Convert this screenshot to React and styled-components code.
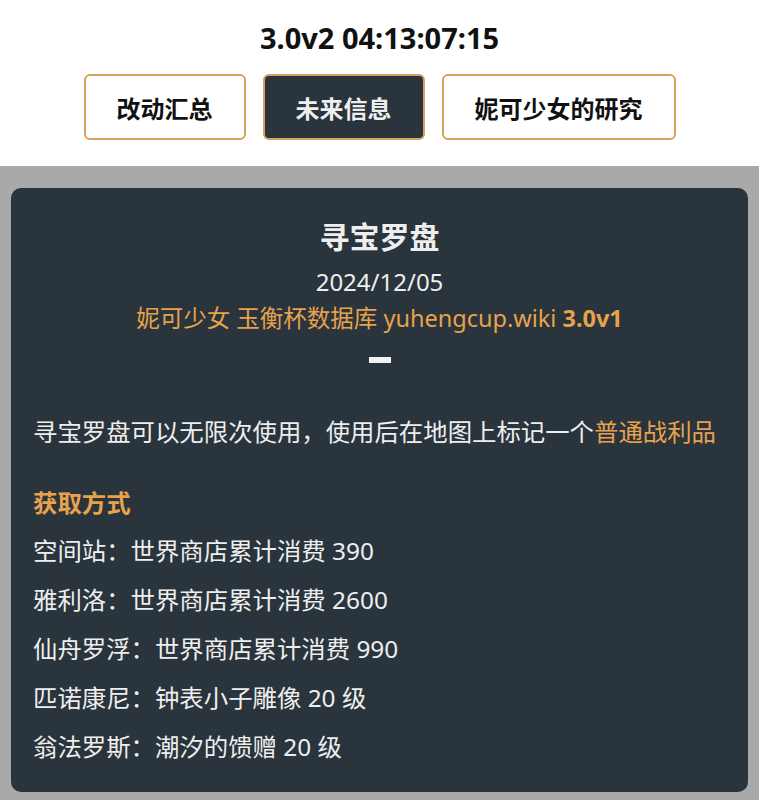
import React from "react";
import styled, { createGlobalStyle } from "styled-components";

const GlobalStyle = createGlobalStyle`
  html, body {
    margin: 0;
    padding: 0;
    background: #a9a9a9;
  }
  body {
    font-family: "Noto Sans", "Noto Sans CJK SC", sans-serif;
  }
  * { box-sizing: border-box; }
`;

const Header = styled.header`
  background: #ffffff;
  display: flex;
  flex-direction: column;
  align-items: center;
  padding: 20px 0 26px;
`;

const Clock = styled.h1`
  margin: 0;
  font-size: 29px;
  line-height: 36px;
  font-weight: 700;
  color: #111;
`;

const Nav = styled.nav`
  display: flex;
  gap: 17px;
  margin-top: 18px;
`;

const NavButton = styled.button`
  height: 66px;
  padding: 0 31px;
  border: 2px solid #d9a05b;
  border-radius: 6px;
  background: ${(p) => (p.$active ? "#29343c" : "#ffffff")};
  color: ${(p) => (p.$active ? "#eeeeee" : "#111111")};
  font-family: "Noto Sans CJK SC", sans-serif;
  font-size: 24px;
  font-weight: 700;
  cursor: pointer;
`;

const Main = styled.main`
  padding: 22px 11px 9px;
`;

const Card = styled.section`
  background: #29343c;
  border-radius: 10px;
  padding: 27px 22px 27px;
  color: #eeeeee;
  display: flex;
  flex-direction: column;
`;

const Centered = styled.div`
  display: flex;
  flex-direction: column;
  align-items: center;
  text-align: center;
`;

const Title = styled.h2`
  margin: 0;
  font-family: "Noto Sans CJK SC", sans-serif;
  font-size: 30px;
  line-height: 40px;
  font-weight: 700;
`;

const DateLine = styled.div`
  margin-top: 8px;
  font-size: 24px;
  line-height: 37px;
`;

const Source = styled.div`
  font-size: 23.5px;
  line-height: 37px;
  color: #e8a24c;
  b { font-weight: 700; }
`;

const Dash = styled.div`
  width: 22px;
  height: 6px;
  background: #f2f2f2;
  margin-top: 20px;
`;

const Paragraph = styled.p`
  margin: 50px 0 0;
  font-size: 24.4px;
  line-height: 37px;
`;

const Highlight = styled.span`
  color: #e8a24c;
`;

const SectionHead = styled.h3`
  margin: 33px 0 0;
  font-family: "Noto Sans CJK SC", sans-serif;
  font-size: 24.4px;
  line-height: 37px;
  font-weight: 700;
  color: #e8a24c;
`;

const List = styled.ul`
  list-style: none;
  margin: 12px 0 0;
  padding: 0;
  display: flex;
  flex-direction: column;
  gap: 12px;
`;

const Item = styled.li`
  font-size: 24.4px;
  line-height: 37px;
`;

const sources = [
  "空间站：世界商店累计消费 390",
  "雅利洛：世界商店累计消费 2600",
  "仙舟罗浮：世界商店累计消费 990",
  "匹诺康尼：钟表小子雕像 20 级",
  "翁法罗斯：潮汐的馈赠 20 级",
];

export default function App() {
  return (
    <>
      <GlobalStyle />
      <Header>
        <Clock>3.0v2 04:13:07:15</Clock>
        <Nav>
          <NavButton>改动汇总</NavButton>
          <NavButton $active>未来信息</NavButton>
          <NavButton>妮可少女的研究</NavButton>
        </Nav>
      </Header>
      <Main>
        <Card>
          <Centered>
            <Title>寻宝罗盘</Title>
            <DateLine>2024/12/05</DateLine>
            <Source>
              妮可少女 玉衡杯数据库 yuhengcup.wiki <b>3.0v1</b>
            </Source>
            <Dash />
          </Centered>
          <Paragraph>
            寻宝罗盘可以无限次使用，使用后在地图上标记一个
            <Highlight>普通战利品</Highlight>
          </Paragraph>
          <SectionHead>获取方式</SectionHead>
          <List>
            {sources.map((s) => (
              <Item key={s}>{s}</Item>
            ))}
          </List>
        </Card>
      </Main>
    </>
  );
}
